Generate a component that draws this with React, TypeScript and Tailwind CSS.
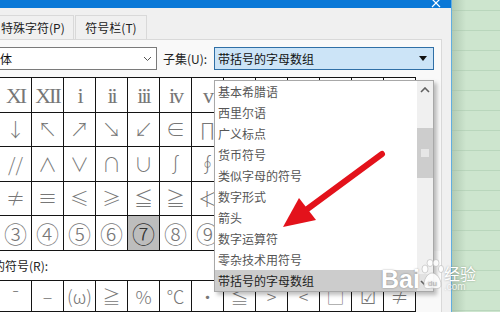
import React from 'react';

const cjk = "font-['Noto_Sans_CJK_SC','Microsoft_YaHei',sans-serif]";

// columns 7+ sit under the open subset list, so they stay blank
const gridRows: string[][] = [
  ['XI', 'XII', 'i', 'ii', 'iii', 'iv', 'v'],
  ['↓', '↖', '↗', '↘', '↙', '∈', '∏'],
  ['//', '∧', '∨', '∩', '∪', '∫', '∮'],
  ['≠', '≡', '≤', '≥', '≦', '≧', '≮'],
  ['③', '④', '⑤', '⑥', '⑦', '⑧', '⑨'],
];

const recent = ['¯', '–', '(ω)', '≧', '%', '℃', '•', '≦', '>', '<', '□', '☑', '≠'];

const subsets = [
  '基本希腊语',
  '西里尔语',
  '广义标点',
  '货币符号',
  '类似字母的符号',
  '数字形式',
  '箭头',
  '数字运算符',
  '零杂技术用符号',
  '带括号的字母数组',
];

const rowHeights = ['h-[34px]', 'h-[33px]', 'h-[34px]', 'h-[33px]', 'h-[34px]'];

function Cell({ s, row, col }: { s: string; row: number; col: number }) {
  const selected = row === 4 && col === 4;
  let font = `${cjk} text-[19px] font-light`;
  if (row === 0) font = "font-['Liberation_Serif',serif] text-[22px] tracking-[-2px]";
  if (row === 4) font = `${cjk} text-[23px] font-light`;
  return (
    <div
      className={`${rowHeights[row]} flex items-center justify-center ${
        selected ? 'bg-[#bdbdbd] text-[#333]' : 'bg-white text-[#777]'
      } ${font}`}
    >
      {s}
    </div>
  );
}

function Chevron({ up }: { up?: boolean }) {
  return (
    <svg width="10" height="6" viewBox="0 0 10 6" className={up ? '' : 'rotate-180'}>
      <path d="M1 5 L5 1 L9 5" fill="none" stroke="#606060" strokeWidth="1.6" />
    </svg>
  );
}

export default function App() {
  return (
    <div className={`relative flex h-[312px] w-[500px] overflow-hidden bg-white ${cjk}`}>
      {/* dialog */}
      <div className="flex h-full w-[452px] flex-col border-r border-[#62aee0] bg-[#f0f0f0]">
        <div className="flex h-[18px] items-start justify-end bg-[#0a78d7] pr-[10px]">
          <svg width="10" height="8" viewBox="0 0 10 8">
            <path d="M1 -1 L9 7 M9 -1 L1 7" stroke="#fff" strokeWidth="1.2" />
          </svg>
        </div>

        <div className="flex h-[31px] items-end pt-[7px] text-[12px] text-[#222]">
          <div className="-ml-px flex h-[24px] w-[75px] items-center border border-b-0 border-[#d9d9d9] bg-[#f0f0f0] pl-[1px]">
            特殊字符(P)
          </div>
          <div className="ml-[1px] flex h-[24px] w-[72px] items-center justify-center border border-b-0 border-[#d9d9d9] bg-[#f0f0f0]">
            符号栏(T)
          </div>
        </div>

        <div className="-ml-px flex w-[443px] flex-1 flex-col border-t border-r border-[#d9d9d9] bg-[#f9f9f9]">
          <div className="flex items-center pt-[7px] text-[12px]">
            <div className="flex h-[23px] w-[158px] items-center justify-between border border-[#7a7a7a] bg-white pr-[4px]">
              <span className="text-[#111]">体</span>
              <svg width="9" height="6" viewBox="0 0 9 6">
                <path d="M1 1 L4.5 4.5 L8 1" fill="none" stroke="#555" strokeWidth="1" />
              </svg>
            </div>
            <div className="ml-[6px] w-[51px] text-[#222]">子集(U):</div>
            <div className="flex h-[23px] w-[220px] items-center justify-between border border-[#2f6fa6] bg-[#cce4f7] pr-[6px] pl-[3px] text-[#111]">
              <span>带括号的字母数组</span>
              <svg width="8" height="5" viewBox="0 0 8 5">
                <path d="M0 0 H8 L4 5 Z" fill="#111" />
              </svg>
            </div>
          </div>

          <div className="mt-[7px] grid w-[417px] grid-cols-[repeat(13,31px)] gap-px bg-[#141414] p-px">
            {gridRows.map((r, ri) =>
              Array.from({ length: 13 }).map((_, ci) => (
                <Cell key={`${ri}-${ci}`} s={r[ci] ?? ''} row={ri} col={ci} />
              )),
            )}
          </div>

          <div className="flex h-[29px] items-center overflow-hidden bg-white text-[12px] text-[#222]">
            <span className="-ml-[6px]">的符号(R):</span>
          </div>

          <div className="grid w-[417px] grid-cols-[repeat(13,31px)] gap-px bg-[#141414] p-px">
            {recent.map((s, i) => (
              <div
                key={i}
                className="flex h-[30px] items-center justify-center bg-white text-[18px] font-light text-[#777]"
              >
                {s}
              </div>
            ))}
          </div>
        </div>
      </div>

      {/* spreadsheet behind */}
      <div className="relative flex flex-1 flex-col bg-[#cde5ce]">
        <div className="h-[11px] border-b border-[#b9d6bc]" />
        {Array.from({ length: 15 }).map((_, i) => (
          <div key={i} className="h-[20px] shrink-0 border-b border-[#b9d6bc]" />
        ))}
        <div className="absolute inset-y-0 left-0 w-[14px] bg-gradient-to-r from-[#9fb9a2]/60 to-transparent" />
      </div>

      {/* subset dropdown list */}
      <div className="absolute top-[80px] left-[214px] flex h-[212px] w-[220px] border border-[#a8a8a8] bg-white text-[12px] shadow-[3px_3px_4px_rgba(0,0,0,0.25)]">
        <div className="flex flex-1 flex-col">
          {subsets.map((s, i) => (
            <div
              key={s}
              className={`h-[21px] pl-[3px] leading-[21px] ${
                i === subsets.length - 1 ? 'bg-[#cccccc] text-[#222]' : 'text-[#555]'
              }`}
            >
              {s}
            </div>
          ))}
        </div>
        <div className="flex w-[16px] flex-col bg-[#f0f0f0]">
          <div className="flex h-[17px] items-center justify-center">
            <Chevron up />
          </div>
          <div className="mt-[30px] flex h-[50px] items-center justify-center bg-[#cdcdcd]">
            <div className="h-[8px] w-[8px] bg-[#e6e6e6]" />
          </div>
          <div className="flex-1" />
          <div className="flex h-[17px] items-center justify-center bg-[#e2e2e2]">
            <Chevron />
          </div>
        </div>
      </div>

      {/* red arrow */}
      <svg className="pointer-events-none absolute inset-0" width="500" height="312" viewBox="0 0 500 312">
        <line x1="382" y1="154" x2="306" y2="210" stroke="#e3121b" strokeWidth="6" strokeLinecap="round" />
        <polygon points="283,227 299,198 316,220" fill="#e3121b" />
      </svg>

      {/* watermark */}
      <div className="pointer-events-none absolute top-[259px] left-[381px] flex items-end text-white [text-shadow:0_0_2px_rgba(0,0,0,0.35)]">
        <span className="font-['Liberation_Sans',sans-serif] text-[25px] leading-[28px] font-bold">Bai</span>
        <svg width="24" height="32" viewBox="0 0 24 32" className="mb-[2px] opacity-90">
          <g fill="#fff" stroke="#b0b0b0" strokeWidth="0.6">
            <ellipse cx="5" cy="10" rx="3" ry="4" />
            <ellipse cx="10" cy="4" rx="3" ry="3.5" />
            <ellipse cx="16" cy="4" rx="3" ry="3.5" />
            <ellipse cx="21" cy="10" rx="2.6" ry="3.6" />
            <path d="M4 26 C4 18 9 14 12 14 C16 14 21 19 21 26 C21 30 16 30 12 29 C8 30 4 30 4 26 Z" />
          </g>
          <text x="8" y="27" fontSize="8" fill="#b0b0b0" fontFamily="Liberation Sans">du</text>
        </svg>
        <div className="mb-[1px] flex flex-col">
          <span className={`${cjk} text-[16px] leading-[18px]`}>经验</span>
          <span className="font-['Liberation_Sans',sans-serif] text-[10px] leading-[10px] opacity-80">.com</span>
        </div>
      </div>
    </div>
  );
}
